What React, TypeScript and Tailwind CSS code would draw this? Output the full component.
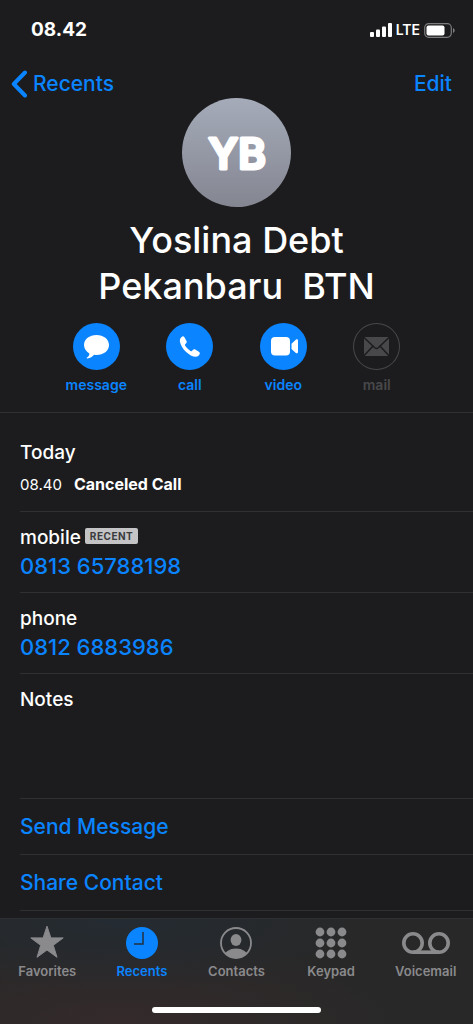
import React, { useState } from 'react';
import { clsx } from 'clsx';

const ACTIONS = [
  { id: 'message', enabled: true },
  { id: 'call', enabled: true },
  { id: 'video', enabled: true },
  { id: 'mail', enabled: false },
];

const PHONES = [
  { label: 'mobile', number: '0813 65788198', recent: true },
  { label: 'phone', number: '0812 6883986', recent: false },
];

const TABS = ['Favorites', 'Recents', 'Contacts', 'Keypad', 'Voicemail'];

function ActionIcon({ id }: { id: string }) {
  if (id === 'message') {
    return (
      <svg viewBox="0 0 47 47" className="size-full" fill="white" aria-hidden="true">
        <path d="M23.500 12C16.400 12 11 16.300 11 22c0 3.600 2.100 6.600 5.300 8.400.2 1.500-.8 3.200-2.300 4.100-.6.400-.3 1 .4.900 2.900-.3 5.100-1.700 6.700-3.600.8.100 1.600.2 2.400.2C30.600 32 36 27.700 36 22S30.600 12 23.500 12Z" />
      </svg>
    );
  }
  if (id === 'call') {
    return (
      <svg viewBox="0 0 47 47" className="size-full" fill="white" aria-hidden="true">
        <path d="M16.400 13.400c-1.700.9-2.800 2.700-2.500 5 .5 3.400 2.900 7.300 6 10.300 3.200 3.100 6.700 5.100 9.800 5.100 1.900 0 3.400-1.200 4-2.700.3-.8.100-1.500-.5-2l-3.900-2.600c-.7-.4-1.500-.3-2.100.2l-1.300 1.200c-.4.400-.9.400-1.400.1-1-.6-2.100-1.500-3-2.400-1-1-1.800-2-2.400-3-.3-.5-.3-1 .1-1.400l1.100-1.200c.5-.6.600-1.400.2-2.100l-2.400-4.100c-.4-.6-1-.8-1.700-.4Z" />
      </svg>
    );
  }
  if (id === 'video') {
    return (
      <svg viewBox="0 0 47 47" className="size-full" fill="white" aria-hidden="true">
        <rect x="11" y="14" width="19" height="18.500" rx="4" />
        <path d="M31.500 20.800l4.300-4.100c.8-.7 2.200-.3 2.200.9v11.500c0 1.200-1.400 1.600-2.200.9l-4.300-4.100Z" />
      </svg>
    );
  }
  return (
    <svg viewBox="0 0 47 47" className="size-full" aria-hidden="true">
      <rect x="11" y="14" width="25" height="19" rx="1" fill="#48484a" />
      <path d="M11 14.500l10.800 10.300c1 .9 2.400.9 3.400 0L36 14.500M11 32.700l8.800-9.500M36 32.700l-8.800-9.500" fill="none" stroke="#1c1c1e" strokeWidth="1.500" />
    </svg>
  );
}

function TabIcon({ name }: { name: string }) {
  if (name === 'Favorites') {
    return (
      <svg viewBox="0 0 36 34" className="h-[34px] w-9" fill="currentColor" stroke="currentColor" strokeWidth="1" strokeLinejoin="round" aria-hidden="true">
        <path d="M18 1.200l3.900 11.700h12.300l-9.900 7.400 3.700 12-10-7.300-10 7.300 3.700-12-9.900-7.400h12.300Z" />
      </svg>
    );
  }
  if (name === 'Recents') {
    return (
      <svg viewBox="0 0 34 34" className="size-[34px]" aria-hidden="true">
        <circle cx="17" cy="18" r="16" fill="currentColor" />
        <path d="M18 7v12H9" fill="none" stroke="#22303c" strokeWidth="1.500" />
      </svg>
    );
  }
  if (name === 'Contacts') {
    return (
      <svg viewBox="0 0 34 34" className="size-[34px]" aria-hidden="true">
        <clipPath id="person">
          <circle cx="17" cy="18" r="15" />
        </clipPath>
        <circle cx="17" cy="18" r="15" fill="none" stroke="currentColor" strokeWidth="1.800" />
        <g clipPath="url(#person)" fill="currentColor">
          <ellipse cx="17" cy="15" rx="5.400" ry="6" />
          <ellipse cx="17" cy="32" rx="12" ry="8.500" />
        </g>
      </svg>
    );
  }
  if (name === 'Keypad') {
    return (
      <svg viewBox="0 0 34 34" className="size-[34px]" fill="currentColor" aria-hidden="true">
        {[6, 17, 28].map((y) => [6, 17, 28].map((x) => <circle key={`${x}-${y}`} cx={x} cy={y + 1} r="4.400" />))}
      </svg>
    );
  }
  return (
    <svg viewBox="0 0 50 34" className="h-[34px] w-[50px]" fill="none" stroke="currentColor" strokeWidth="3.600" aria-hidden="true">
      <circle cx="12" cy="18" r="9.200" />
      <circle cx="38" cy="18" r="9.200" />
      <path d="M12 27.200h26" />
    </svg>
  );
}

function StatusBar() {
  return (
    <div className="flex h-[60px] items-center justify-between pr-[18px] pl-[31px]">
      <span className="text-[19px] font-bold">08.42</span>
      <div className="flex items-center gap-1">
        <svg viewBox="0 0 22 14" className="h-[14px] w-[22px]" fill="white" aria-hidden="true">
          <rect x="0" y="9" width="4" height="5" rx="1" />
          <rect x="6" y="6.500" width="4" height="7.500" rx="1" />
          <rect x="12" y="3.500" width="4" height="10.500" rx="1" />
          <rect x="18" y="0" width="4" height="14" rx="1" />
        </svg>
        <span className="text-sm font-semibold">LTE</span>
        <svg viewBox="0 0 31 15" className="h-[15px] w-[31px]" aria-hidden="true">
          <rect x="0.700" y="0.700" width="26.600" height="13.600" rx="4" fill="none" stroke="#7c7c7e" strokeWidth="1.200" />
          <rect x="2.500" y="2.500" width="18" height="10" rx="2" fill="white" />
          <path d="M29 5v5c1-.4 1.700-1.400 1.700-2.500S30 5.400 29 5Z" fill="#7c7c7e" />
        </svg>
      </div>
    </div>
  );
}

export default function App() {
  const [activeTab, setActiveTab] = useState('Recents');
  const [notes, setNotes] = useState('');

  return (
    <div className="flex min-h-screen flex-col bg-[#1c1c1e] font-['Inter',sans-serif] text-white">
      <StatusBar />

      {/* Navigation */}
      <nav className="flex h-[38px] items-center justify-between pt-[10px] pr-[21px] pl-[11px] text-[21px] font-medium text-[#0a84ff]">
        <a href="#recents" className="flex items-center gap-[5px]">
          <svg viewBox="0 0 17 28" className="h-7 w-[17px]" fill="none" stroke="currentColor" strokeWidth="4" strokeLinecap="round" strokeLinejoin="round" aria-hidden="true">
            <path d="M14 2.500L2.800 14 14 25.500" />
          </svg>
          Recents
        </a>
        <button type="button">Edit</button>
      </nav>

      {/* Contact header */}
      <header className="flex flex-col items-center border-b border-[#303032] pb-[17px]">
        <svg viewBox="0 0 109 109" className="size-[109px]" role="img" aria-label="YB">
          <defs>
            <linearGradient id="avatar" x1="0" y1="0" x2="0" y2="1">
              <stop offset="0" stopColor="#a5abb9" />
              <stop offset="1" stopColor="#848691" />
            </linearGradient>
          </defs>
          <circle cx="54.500" cy="54.500" r="54.500" fill="url(#avatar)" />
          <text x="55" y="71" textAnchor="middle" fontSize="42" fill="white" stroke="white" strokeWidth="3" strokeLinejoin="round" className="font-['Inter',sans-serif] font-semibold">YB</text>
        </svg>
        <h1 className="mt-[10px] text-center text-4xl leading-[46px] font-medium whitespace-pre">
          {'Yoslina Debt\nPekanbaru  BTN'}
        </h1>
        <div className="mt-[14px] grid w-[374px] max-w-full grid-cols-4">
          {ACTIONS.map((action) => (
            <button
              key={action.id}
              type="button"
              disabled={!action.enabled}
              className={clsx('flex flex-col items-center gap-[5px] text-sm font-semibold', action.enabled ? 'text-[#0a84ff]' : 'text-[#48484a]')}
            >
              <span className={clsx('block size-[47px] rounded-full', action.enabled ? 'bg-[#0a84ff]' : 'ring-1 ring-[#48484a] ring-inset')}>
                <ActionIcon id={action.id} />
              </span>
              {action.id}
            </button>
          ))}
        </div>
      </header>

      <main className="flex-1 pl-5">
        {/* Call history */}
        <section className="border-b border-[#303032] pt-[26px] pb-[14px]">
          <h2 className="text-[19px] leading-7 font-medium">Today</h2>
          <p className="mt-[5px] flex items-baseline gap-3 leading-6">
            <span className="text-[15px]">08.40</span>
            <span className="text-base leading-6 font-bold">Canceled Call</span>
          </p>
        </section>

        {PHONES.map((phone) => (
          <section key={phone.label} className="border-b border-[#303032] py-3">
            <div className="flex items-center gap-1 text-[19px] leading-7 font-medium">
              {phone.label}
              {phone.recent && (
                <span className="mb-1 rounded-xs bg-[#c4c4c6] px-[5px] text-[10px] leading-4 font-bold tracking-wider text-[#3a3a3c]">RECENT</span>
              )}
            </div>
            <a href={`tel:${phone.number.replace(' ', '')}`} className="block text-[22px] leading-7 font-medium text-[#0a84ff]">
              {phone.number}
            </a>
          </section>
        ))}

        <section className="border-b border-[#303032] pt-3">
          <label htmlFor="notes" className="block text-[19px] leading-7 font-medium">Notes</label>
          <textarea
            id="notes"
            value={notes}
            onChange={(e) => setNotes(e.target.value)}
            className="block h-[84px] w-full resize-none bg-transparent pr-5 text-[19px] outline-none"
          />
        </section>

        {['Send Message', 'Share Contact'].map((item) => (
          <button key={item} type="button" className="block h-14 w-full border-b border-[#303032] text-left text-[21px] font-medium text-[#0a84ff]">
            {item}
          </button>
        ))}
      </main>

      {/* Tab bar */}
      <footer className="sticky bottom-0 mt-[7px] border-t border-[#2e3033] bg-[#282828] bg-[radial-gradient(ellipse_at_25%_0%,#242b32_0%,transparent_50%),radial-gradient(ellipse_at_25%_100%,#342a2b_0%,transparent_60%)] pt-[6px] pb-[11px]">
        <nav className="grid grid-cols-5">
          {TABS.map((tab) => (
            <button
              key={tab}
              type="button"
              onClick={() => setActiveTab(tab)}
              className={clsx('flex flex-col items-center gap-[2px] text-[13px] leading-5 font-semibold', tab === activeTab ? 'text-[#0a84ff]' : 'text-[#8a8a8c]')}
            >
              <TabIcon name={tab} />
              {tab}
            </button>
          ))}
        </nav>
        <div className="mx-auto mt-[26px] h-[6px] w-[169px] rounded-full bg-white" />
      </footer>
    </div>
  );
}
